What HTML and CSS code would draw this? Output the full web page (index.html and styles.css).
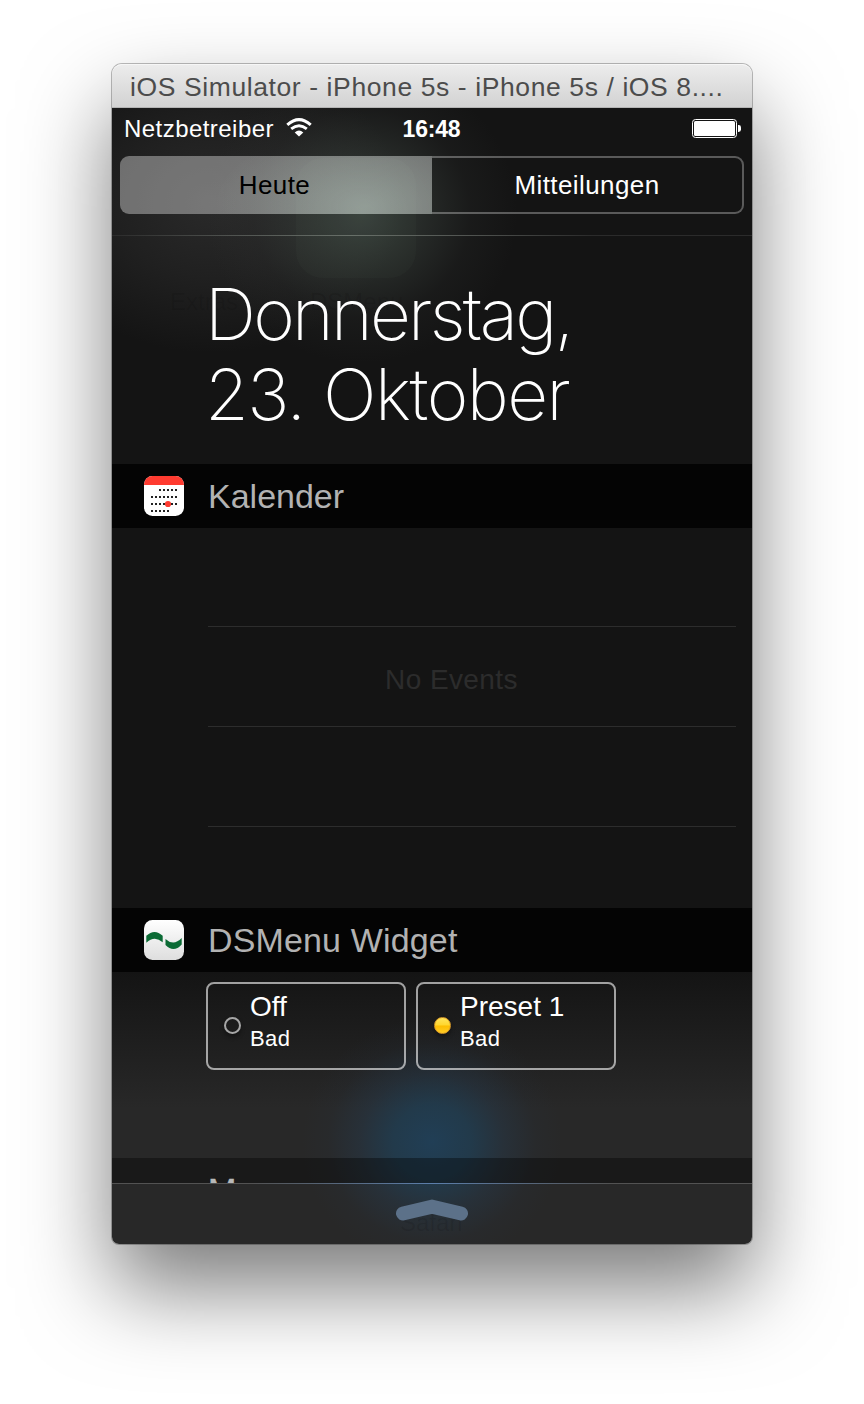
FILE: index.html
```html
<!DOCTYPE html>
<html lang="de">
<head>
<meta charset="utf-8">
<title>iOS Simulator</title>
<link rel="stylesheet" href="styles.css">
</head>
<body>
<div class="window">
  <div class="titlebar"><span class="title">iOS Simulator - iPhone 5s - iPhone 5s / iOS 8....</span></div>
  <div class="screen">
    <div class="backdrop">
      <div class="ghost-icon"></div>
      <span class="ghost ghost-extras">Extras</span>
      <span class="ghost ghost-dsmenu">DSMenu</span>
      <span class="ghost ghost-safari">Safari</span>
    </div>
    <header class="header">
      <div class="status">
        <div class="carrier"><span class="carrier-name">Netzbetreiber</span>
          <svg class="wifi" width="26" height="19" viewBox="0 0 26 19" fill="none" stroke="#fff">
            <path d="M1.3 6.8Q13-3.6 24.7 6.8" stroke-width="3"/>
            <path d="M5.2 10.9Q13 4.4 20.8 10.9" stroke-width="2.9"/>
            <path d="M8.7 14.4Q13 10.6 17.3 14.4L13 18.6Z" fill="#fff" stroke="none"/>
          </svg>
        </div>
        <span class="time">16:48</span>
        <svg class="battery" width="49" height="19" viewBox="0 0 49 19">
          <rect x=".5" y=".5" width="44" height="18" rx="3" fill="none" stroke="#fff"/>
          <rect x="2" y="2" width="41" height="15" rx="1.5" fill="#fff"/>
          <path d="M46 6h.6a2.4 2.4 0 0 1 2.4 2.4v2.2a2.4 2.4 0 0 1-2.4 2.4H46z" fill="#fff"/>
        </svg>
      </div>
      <div class="segments">
        <div class="segment active"><span>Heute</span></div>
        <div class="segment"><span>Mitteilungen</span></div>
      </div>
    </header>
    <main class="today">
      <h1 class="date"><span class="line1">Donnerstag,</span><span class="line2">23. Oktober</span></h1>
      <section>
        <h2 class="section-head">
          <svg width="40" height="40" viewBox="0 0 40 40">
            <clipPath id="cal"><rect width="40" height="40" rx="8.5"/></clipPath>
            <g clip-path="url(#cal)"><rect width="40" height="40" fill="#fff"/><rect width="40" height="9" fill="#ff3b30"/></g>
            <g stroke="#222" stroke-width="2" stroke-dasharray="2 2">
              <path d="M15 14H33M7 21H33M7 28H33M7 35H25"/>
            </g>
            <circle cx="24" cy="28" r="3.1" fill="#ff3b30"/>
          </svg>
          <span class="kalender">Kalender</span>
        </h2>
        <div class="events">
          <div class="row first"></div>
          <div class="row"><span>No Events</span></div>
          <div class="row"></div>
        </div>
      </section>
      <section>
        <h2 class="section-head">
          <svg width="40" height="40" viewBox="0 0 40 40">
            <defs><linearGradient id="tile" x2="0" y2="1"><stop offset="0" stop-color="#fff"/><stop offset="1" stop-color="#dedede"/></linearGradient></defs>
            <rect width="40" height="40" rx="8.5" fill="url(#tile)"/>
            <path d="M2.3 15.8Q10.5 8.2 18.7 15.8V22.2Q10.5 14.8 2.3 22.8Z" fill="#0b6b35"/>
            <path d="M21.5 18.9Q29.6 26.5 37.7 18V24.4Q29.6 33.4 21.5 24.9Z" fill="#0b6b35"/>
          </svg>
          <span class="dsmenu">DSMenu Widget</span>
        </h2>
        <div class="presets">
          <div class="preset"><i class="lamp"></i><div><b>Off</b><small>Bad</small></div></div>
          <div class="preset"><i class="lamp on"></i><div><b>Preset 1</b><small>Bad</small></div></div>
        </div>
      </section>
      <section class="peek"><span>M</span></section>
    </main>
    <footer class="grabber">
      <svg width="72" height="22" viewBox="0 0 72 22"><path d="M7 14.5L36 7.7L65 14.5" fill="none" stroke="#5c7189" stroke-width="14" stroke-linecap="round"/></svg>
    </footer>
  </div>
</div>
</body>
</html>
```
FILE: styles.css
```css
* { box-sizing: border-box; }
body {
  margin: 0;
  height: 1404px;
  padding: 64px 112px;
  background: #fff;
  overflow: hidden;
  font-family: "Liberation Sans", Arial, sans-serif;
  color: #fff;
}
.window {
  width: 640px;
  height: 1180px;
  border-radius: 10px 10px 7px 7px;
  box-shadow: 0 0 0 1px rgba(0,0,0,.26), 0 44px 88px rgba(0,0,0,.52);
  display: flex;
  flex-direction: column;
}
.titlebar {
  height: 44px;
  padding-left: 18px;
  border-radius: 10px 10px 0 0;
  background: linear-gradient(#ececec, #d2d2d2);
  border-top: 1px solid #f6f6f6;
  border-bottom: 1px solid #b4b4b4;
  color: #4c4c4c;
  font-size: 26.5px;
  line-height: 44px;
  white-space: nowrap;
}
.title { letter-spacing: .6px; }
.screen {
  flex: 1;
  position: relative;
  display: flex;
  flex-direction: column;
  overflow: hidden;
  border-radius: 0 0 7px 7px;
  background:
    radial-gradient(ellipse 130px 125px at 320px 1034px, rgba(30,72,105,.7), rgba(30,70,98,.6) 30%, rgba(38,64,88,.35) 55%, rgba(40,54,70,.12) 80%, transparent),
    radial-gradient(ellipse 155px 150px at 250px 105px, rgba(72,86,78,.65), rgba(68,78,72,.42) 35%, rgba(60,64,62,.14) 70%, transparent),
    radial-gradient(ellipse 190px 150px at 100px 95px, rgba(60,60,60,.55), rgba(60,60,60,.3) 50%, transparent),
    linear-gradient(#141414 864px, #282828 1000px);
}
.backdrop { position: absolute; inset: 0; }
.ghost-icon {
  position: absolute; left: 184px; top: 50px; width: 120px; height: 120px;
  border-radius: 27px; background: rgba(130,160,140,.035);
}
.ghost { position: absolute; font-size: 24px; line-height: 28px; color: rgba(0,0,0,.09); }
.ghost-extras { left: 58px; top: 180px; }
.ghost-dsmenu { left: 198px; top: 180px; }
.ghost-safari { left: 288px; top: 1101px; }
.header {
  position: relative;
  height: 128px;
  padding: 0 8px;
  border-bottom: 1px solid;
  border-image: radial-gradient(circle 240px at 240px 128px, #687069, #505350 50%, #2b2b2b) 1;
}
.status {
  height: 48px;
  padding: 0 3px 6px 4px;
  display: grid;
  grid-template-columns: 1fr auto 1fr;
  align-items: center;
  font-size: 24px;
}
.carrier { display: flex; align-items: center; gap: 12px; }
.carrier-name { letter-spacing: .45px; }
.wifi { margin-top: -3px; }
.time { font-weight: bold; font-size: 23px; letter-spacing: -.2px; margin-right: 2px; }
.battery { justify-self: end; margin-top: -1px; }
.segments {
  height: 58px;
  display: grid;
  grid-template-columns: 1fr 1fr;
  border-radius: 9px;
  font-size: 26px;
  letter-spacing: .4px;
}
.segment {
  display: flex;
  align-items: center;
  justify-content: center;
  border: 2px solid rgba(255,255,255,.3);
  border-left: 0;
  border-radius: 0 9px 9px 0;
}
.segment.active {
  border: 0;
  padding-right: 3px;
  border-radius: 9px 0 0 9px;
  color: #000;
  background: radial-gradient(ellipse 150px 80px at 245px 50px, rgba(200,225,210,.25), transparent), rgba(255,255,255,.36);
}
.today { position: relative; flex: 1; overflow: hidden; }
.date {
  margin: 0;
  height: 228px;
  padding: 38px 0 0 93px;
  font: 200 71px/80px Inter, "Liberation Sans", sans-serif;
}
.date span { display: block; white-space: nowrap; }
.line1 { letter-spacing: -2.7px; }
.line2 { letter-spacing: -1.5px; }
.section-head {
  margin: 0;
  height: 64px;
  padding-left: 32px;
  display: flex;
  align-items: center;
  gap: 24px;
  background: #040404;
  color: #b2b2b2;
  font-size: 34px;
  font-weight: normal;
}
.dsmenu { letter-spacing: .15px; }
.events { height: 380px; padding: 0 16px 0 96px; }
.row {
  height: 100px;
  border-bottom: 1px solid #2d2d2d;
  display: flex;
  align-items: center;
  justify-content: center;
  padding: 7px 41px 0 0;
  color: #2c2c2c;
  font-size: 28px;
  letter-spacing: .4px;
}
.row.first { height: 99px; }
.presets { height: 186px; padding: 10px 0 0 94px; display: flex; gap: 10px; }
.preset {
  width: 200px;
  height: 88px;
  padding: 7px 0 0 16px;
  display: flex;
  gap: 9px;
  border: 2px solid rgba(255,255,255,.6);
  border-radius: 8px;
}
.preset b, .preset small { display: block; font-weight: normal; }
.preset b { font-size: 28px; line-height: 32px; }
.preset small { font-size: 22px; line-height: 32px; letter-spacing: .4px; }
.lamp {
  width: 17px;
  height: 17px;
  margin-top: 26px;
  border: 2px solid #a6a6a6;
  border-radius: 50%;
  box-shadow: 0 3px 4px rgba(0,0,0,.35);
}
.lamp.on { border: 1px solid #d99a28; background: linear-gradient(#ffe45a, #ffd62e 48%, #fdbd00 52%, #ffcb24); }
.peek {
  height: 25px;
  padding: 15px 0 0 96px;
  overflow: hidden;
  background: rgba(0,0,0,.36);
  color: #b9b9b9;
  font-size: 34px;
  line-height: 34px;
}
.peek span { -webkit-text-stroke: .6px #b9b9b9; }
.grabber {
  position: relative;
  height: 61px;
  padding-top: 15px;
  border-top: 1px solid;
  border-image: radial-gradient(circle 180px at 320px 0, #5b7eab, #525252) 1;
  display: flex;
  justify-content: center;
}
```
